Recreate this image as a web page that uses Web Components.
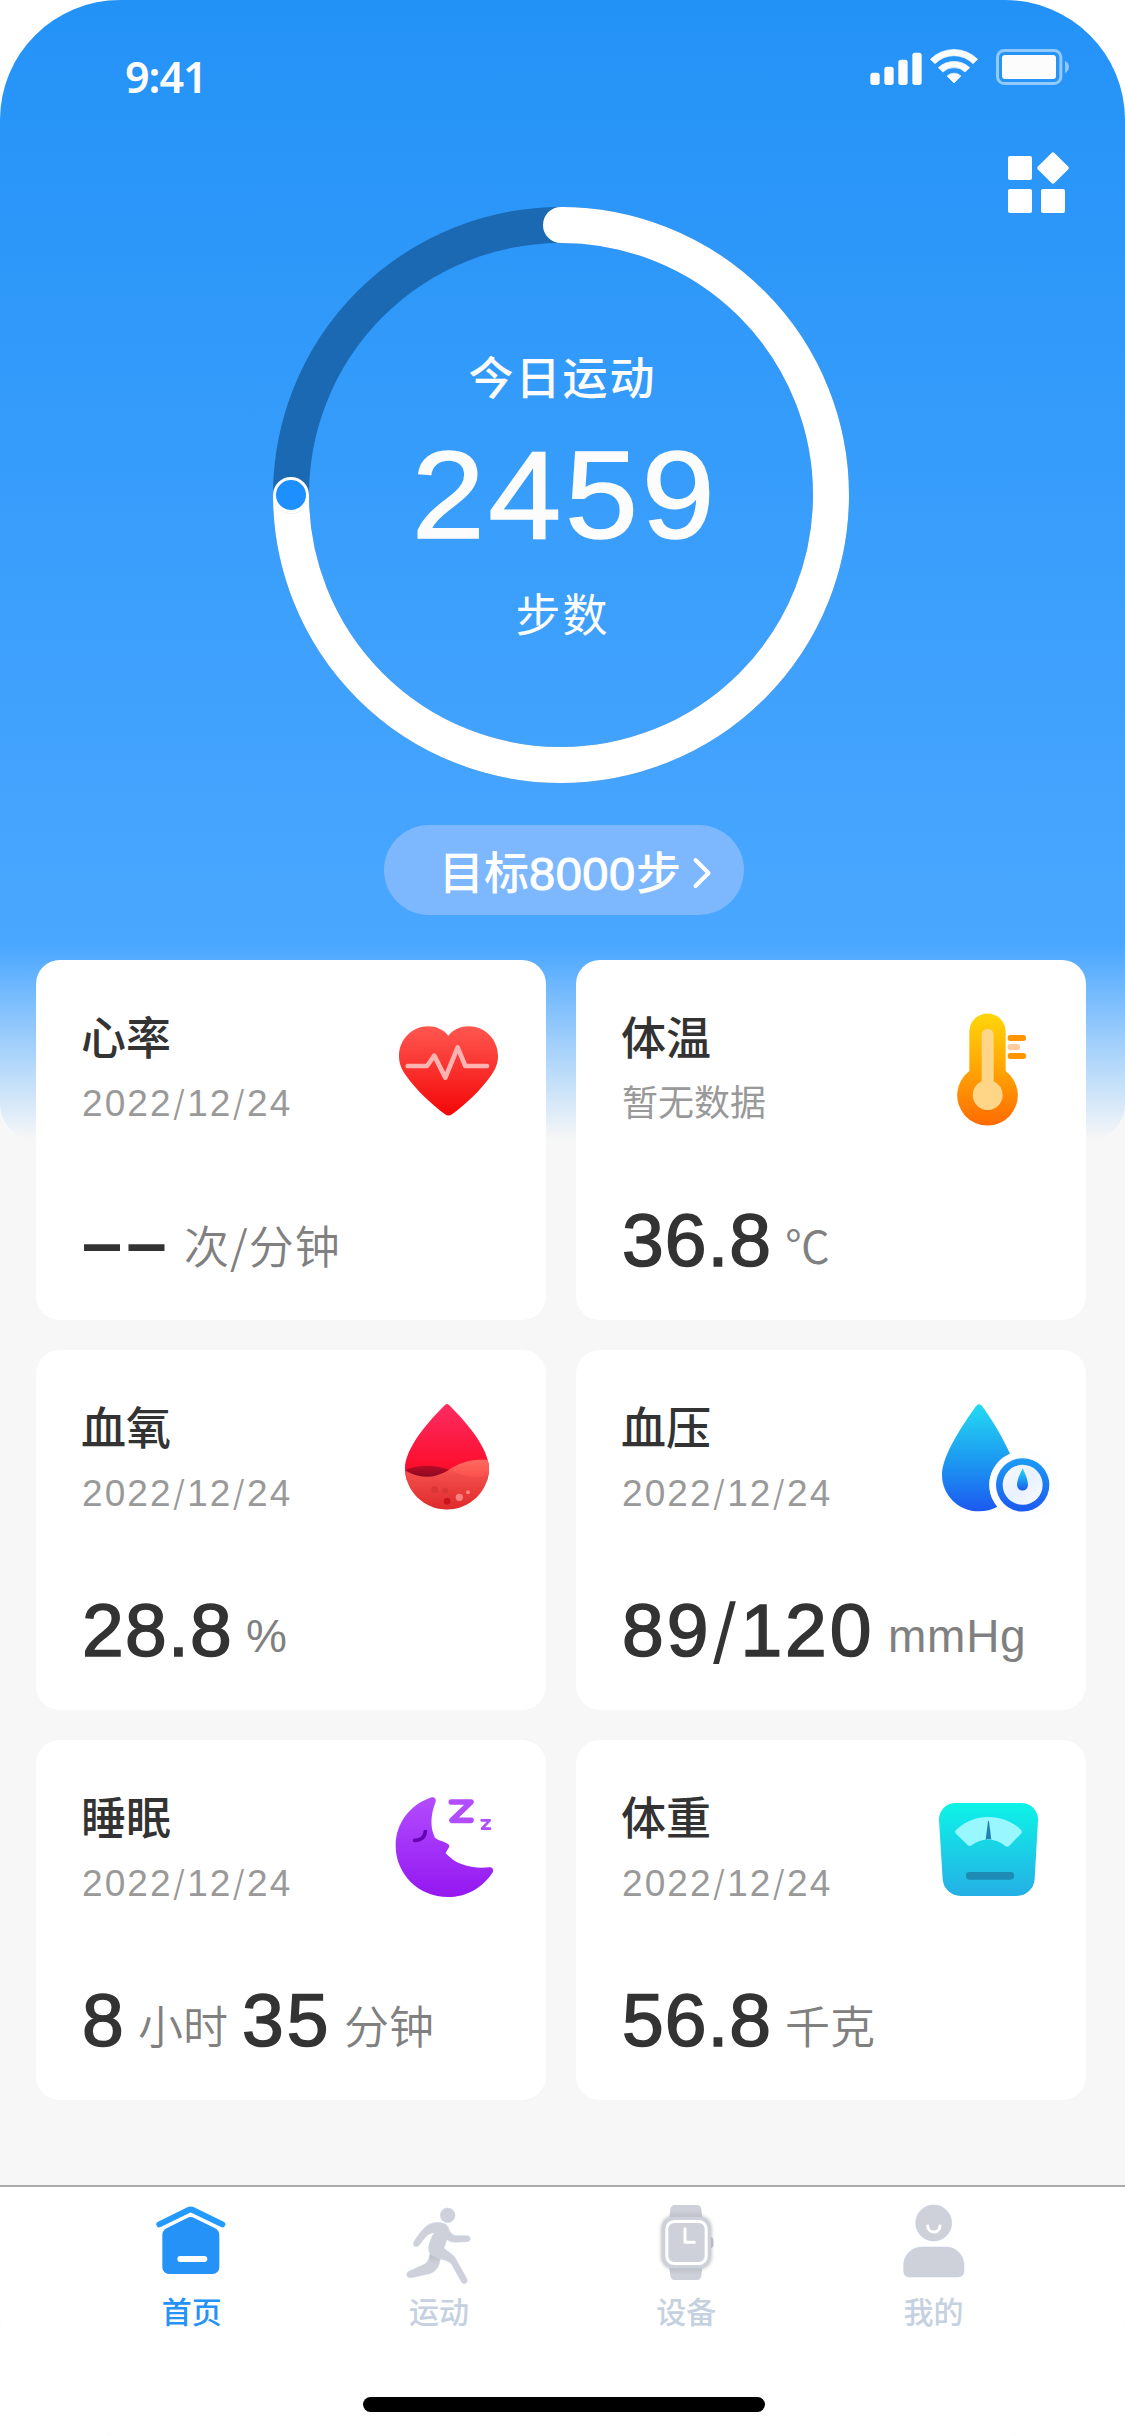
<!DOCTYPE html>
<html lang="zh-CN">
<head>
<meta charset="utf-8">
<title>健康</title>
<style>
  html, body { margin: 0; background: #fff; }
  body { width: 1125px; height: 2436px; overflow: hidden; font-family: "Noto Sans CJK SC", sans-serif; }
</style>
</head>
<body>
<health-app></health-app>

<script>
/* Text whose tracking is adjusted so that it spans the given width. */
class FitText extends HTMLElement {
  constructor() {
    super();
    this.attachShadow({ mode: 'open' }).innerHTML =
      '<style>:host{display:inline-block;white-space:nowrap}</style><span><slot></slot></span>';
  }
  connectedCallback() {
    const w = parseFloat(this.getAttribute('w'));
    const n = [...this.textContent].length;
    const natural = this.shadowRoot.querySelector('span').offsetWidth;
    if (w && natural) {
      this.style.letterSpacing = ((w - natural) / n).toFixed(3) + 'px';
      this.style.width = w + 'px';
    }
  }
}

class StatusBar extends HTMLElement {
  constructor() {
    super();
    this.attachShadow({ mode: 'open' }).innerHTML = `
<style>
  :host { display: flex; justify-content: space-between; align-items: flex-start; height: 103px; padding: 49px 55px 0 125px; color: #fcfcfc; }
  .time { font: 600 43px/60px "Noto Sans", sans-serif; margin-top: -2px; }
  svg { display: block; }
</style>
<fit-text class="time" w="82">9:41</fit-text>
<svg width="200" height="36" viewBox="90 87 600 108" fill="#fcfcfc">
  <rect x="91" y="158" width="28" height="37" rx="8"/>
  <rect x="133" y="140" width="28" height="55" rx="8"/>
  <rect x="175" y="119" width="28" height="76" rx="8"/>
  <rect x="217" y="98" width="28" height="97" rx="8"/>
  <g stroke="#fcfcfc" stroke-width="2" stroke-linejoin="round">
    <path d="M271 118A100 100 0 0 1 413 118L399 131A80 80 0 0 0 285 131Z"/>
    <path d="M295 143A68 68 0 0 1 389 143L375 156A48 48 0 0 0 309 156Z"/>
    <path d="M321 168A30 30 0 0 1 363 168L342 189Z"/>
  </g>
  <rect x="472.500" y="91.500" width="190" height="99" rx="20" fill="none" stroke="#fff" stroke-opacity=".5" stroke-width="9"/>
  <rect x="486" y="105" width="162" height="72" rx="9"/>
  <path d="M675 123C682 126 687 133 687 141C687 149 682 156 675 159Z" fill-opacity=".5"/>
</svg>`;
  }
}

class StepRing extends HTMLElement {
  constructor() {
    super();
    this.attachShadow({ mode: 'open' }).innerHTML = `
<style>
  :host { display: grid; width: 576px; height: 576px; color: #fcfcfc; }
  svg, .center { grid-area: 1 / 1; }
  svg { overflow: visible; }
  .center { display: flex; flex-direction: column; align-items: center; padding: 139px 0 0 3px; }
  .label { font-size: 45px; line-height: 60px; }
  .top { font-weight: 500; }
  .num { font-family: "Liberation Sans", sans-serif; font-size: 125px; line-height: 120px; margin: 29px 0 28px 4px; transform: scaleX(1.05); -webkit-text-stroke: 1.500px #fcfcfc; }
</style>
<svg width="576" height="576" viewBox="0 0 576 576" fill="none">
  <circle cx="288" cy="288" r="270" stroke="#1b69b3" stroke-width="36"/>
  <path d="M288 18A270 270 0 1 1 18 288" stroke="#fff" stroke-width="36"/>
  <circle cx="288" cy="18" r="18" fill="#fff"/>
  <circle cx="18" cy="289" r="18" fill="#000" opacity=".06"/>
  <circle cx="18" cy="288" r="16.500" fill="#1e8fff" stroke="#fff" stroke-width="3"/>
</svg>
<div class="center">
  <fit-text class="label top" w="188">今日运动</fit-text>
  <fit-text class="num" w="292">2459</fit-text>
  <fit-text class="label" w="94">步数</fit-text>
</div>`;
  }
}

class GoalPill extends HTMLElement {
  constructor() {
    super();
    this.attachShadow({ mode: 'open' }).innerHTML = `
<style>
  :host { display: flex; align-items: center; box-sizing: border-box; width: 360px; height: 90px; padding: 0 0 0 55px; border-radius: 45px; background: #7db8ff; color: #fff; font-size: 45px; line-height: 60px; font-weight: 500; }
  svg { margin: 5px 0 0 11px; }
  .t { display: flex; align-items: baseline; margin-top: 5px; }
  .d { font-family: "Liberation Sans", sans-serif; font-size: 47px; font-weight: 400; -webkit-text-stroke: 1px #fff; }
</style>
<div class="t"><span>目标</span><fit-text class="d" w="107">8000</fit-text><span>步</span></div>
<svg width="20" height="32" viewBox="0 0 20 32" fill="none" stroke="#fff" stroke-width="4" stroke-linecap="round" stroke-linejoin="round"><path d="M3.500 3L16.500 16L3.500 29"/></svg>`;
  }
}

const ICONS = {
  heart: `<defs><linearGradient id="g" x1="0" y1="0" x2="0" y2="1"><stop stop-color="#ff5750"/><stop offset="1" stop-color="#f30707"/></linearGradient></defs>
    <path fill="url(#g)" d="M205 107C190 89 169 79 145 79C96 79 57 119 57 168C57 192 66 210 79 228C108 270 158 316 194 342C202 348 209 348 217 342C254 316 303 270 332 228C345 210 354 192 354 168C354 119 315 79 266 79C242 79 220 89 205 107Z"/>
    <path fill="none" stroke="#ffb3b0" stroke-width="14" stroke-linecap="round" stroke-linejoin="round" d="M83 198H141L163 167L196 233L233 142L256 198H321"/>`,
  temp: `<defs><linearGradient id="g" x1="0" y1="0" x2="0" y2="1"><stop stop-color="#ffd60a"/><stop offset=".55" stop-color="#ff9f05"/><stop offset="1" stop-color="#ff6a00"/></linearGradient></defs>
    <g transform="translate(0 -30)"><path fill="url(#g)" d="M148 125A54.500 54.500 0 0 1 257 125V243A91 91 0 1 1 148 243Z"/>
    <path fill="#ffd588" d="M185 134A18 18 0 0 1 221 134V274A45 45 0 1 1 185 274Z"/>
    <rect x="263" y="135" width="55" height="18" rx="8" fill="#ff9500"/><rect x="263" y="162" width="37" height="18" rx="8" fill="#ffcb9b"/><rect x="263" y="189" width="55" height="18" rx="8" fill="#ff9500"/></g>`,
  oxygen: `<defs><linearGradient id="g" x1="0" y1="72" x2="0" y2="275" gradientUnits="userSpaceOnUse"><stop stop-color="#fb2c62"/><stop offset="1" stop-color="#fd0c29"/></linearGradient>
    <linearGradient id="h" x1="0" y1="240" x2="0" y2="390" gradientUnits="userSpaceOnUse"><stop stop-color="#fa5b57"/><stop offset="1" stop-color="#de2a2b"/></linearGradient>
    <linearGradient id="k" x1="0" y1="0" x2="0" y2="1"><stop stop-color="#b80c26"/><stop offset="1" stop-color="#8c0820"/></linearGradient>
    <linearGradient id="m" x1="0" y1="0" x2="0" y2="1"><stop stop-color="#ff6a60"/><stop offset="1" stop-color="#fb4f4b"/></linearGradient>
    <clipPath id="c"><path d="M195 75Q201 69 207 75C250 117 327 202 327 265C327 333 270 389 201 389C132 389 75 333 75 265C75 202 152 117 195 75Z"/></clipPath></defs>
    <g transform="translate(0 -30)"><g clip-path="url(#c)"><path fill="url(#g)" d="M70 60H335V300H70Z"/>
    <path fill="url(#h)" d="M70 269C120 296 165 294 206 270C245 247 285 233 335 242V395H70Z"/>
    <path fill="url(#k)" d="M75 271C115 254 160 253 207 269C165 297 115 297 75 271Z"/>
    <path fill="url(#m)" d="M207 269C245 246 285 233 330 243V275C314 293 285 297 250 286C232 280 220 274 207 269Z"/>
    <circle cx="164" cy="329" r="10" fill="#d93635"/><circle cx="196" cy="332" r="9" fill="#d93635"/><circle cx="201" cy="364" r="10" fill="#c9131b"/><circle cx="238" cy="352" r="11" fill="#fb817e"/><circle cx="264" cy="337" r="6" fill="#fb817e"/></g></g>`,
  pressure: `<defs><linearGradient id="g" x1="0" y1="0" x2="0" y2="1"><stop stop-color="#24daf2"/><stop offset=".55" stop-color="#1c96f1"/><stop offset="1" stop-color="#1c59f0"/></linearGradient>
    <linearGradient id="h" x1="0" y1="0" x2="0" y2="1"><stop stop-color="#1c9cf5"/><stop offset="1" stop-color="#1c59f0"/></linearGradient>
    <radialGradient id="s"><stop offset=".5" stop-color="#4a90f5" stop-opacity=".1"/><stop offset="1" stop-color="#4a90f5" stop-opacity="0"/></radialGradient>
    <linearGradient id="i" x1="0" y1="0" x2="1" y2="1"><stop stop-color="#f9fbff"/><stop offset=".5" stop-color="#e8f1ff"/><stop offset="1" stop-color="#fafcff"/></linearGradient></defs>
    <g transform="translate(0 -30)"><path fill="url(#g)" d="M168 78Q177 68 186 78C215 117 248 172 270 221A101 101 0 0 0 232 380C215 389 198 394 177 394C115 394 66 345 66 284C66 226 129 134 168 78Z"/>
    <circle cx="308" cy="315" r="112" fill="url(#s)"/><circle cx="308" cy="315" r="100" fill="#fff" fill-opacity=".7"/>
    <circle cx="308" cy="314.500" r="80" fill="url(#h)"/><circle cx="308" cy="314.500" r="60" fill="url(#i)"/>
    <path fill="url(#g)" d="M308 265C315 280 324 300 324 315A16 16 0 0 1 291 315C291 300 301 280 308 265Z"/></g>`,
  sleep: `<defs><linearGradient id="g" x1="0" y1="0" x2="0" y2="1"><stop stop-color="#b24cff"/><stop offset="1" stop-color="#9417f0"/></linearGradient></defs>
    <path fill="url(#g)" d="M155 52C163 50 169 57 167 65C150 108 151 145 165 173C174 182 199 184 208 196C209 204 199 212 197 220C231 257 278 267 328 262C336 261 341 268 339 275C309 323 259 351 204 351C117 351 47 283 47 197C47 129 91 73 155 52Z"/>
    <path fill="none" stroke="#6500b0" stroke-width="11" stroke-linecap="round" d="M104 181C122 182 135 171 136 155"/>
    <path fill="none" stroke="#b24cff" stroke-width="17" stroke-linecap="round" stroke-linejoin="round" d="M214 66H273L216 121H273"/>
    <path fill="none" stroke="#b24cff" stroke-width="8" stroke-linecap="round" stroke-linejoin="round" d="M305 121H329L306 146H330"/>`,
  weight: `<defs><linearGradient id="g" x1="0" y1="0" x2="0" y2="1"><stop stop-color="#0df3e7"/><stop offset="1" stop-color="#25afe5"/></linearGradient></defs>
    <path fill="url(#g)" d="M107 69H304A50 50 0 0 1 354 121L344 297A54 54 0 0 1 290 348H122A54 54 0 0 1 68 297L57 121A50 50 0 0 1 107 69Z"/>
    <path fill="#99f8ff" d="M108 150C136 124 169 111 205 111C242 111 276 124 303 149Q308 155 303 161L268 197Q262 203 255 197C224 173 186 173 155 196Q149 200 143 195L108 161Q104 155 108 150Z"/>
    <path fill="#2382b4" d="M204 124Q205.500 121 207 124L214 179C208 177 203 178 197 179Z"/>
    <rect x="138" y="276" width="144" height="23" rx="10" fill="#1e8bb5"/>`
};

class MetricCard extends HTMLElement {
  constructor() {
    super();
    this.attachShadow({ mode: 'open' });
  }
  connectedCallback() {
    this.shadowRoot.innerHTML = `
<style>
  :host { display: flex; flex-direction: column; box-sizing: border-box; height: 360px; padding: 46px 16px 0 45px; border-radius: 24px; background: #fff; color: #333; }
  .head { display: flex; justify-content: space-between; height: 120px; }
  .title { font-size: 45px; line-height: 60px; font-weight: 500; }
  .sub { margin: 10px 0 0 1px; font-size: 36px; line-height: 48px; color: #999; }
  .icon { flex: none; width: 150px; height: 120px; margin-top: -6px; }
  svg { display: block; overflow: visible; }
  .value { display: flex; align-items: baseline; margin-top: 72px; padding-left: 1px; }
</style>
<div class="head">
  <div><div class="title">${this.getAttribute('name')}</div><div class="sub"><slot name="sub"></slot></div></div>
  <div class="icon"><svg width="150" height="120" viewBox="0 0 450 360">${ICONS[this.getAttribute('icon')]}</svg></div>
</div>
<div class="value"><slot></slot></div>`;
  }
}

const NAV = {
  home: `<g transform="translate(-149 -96)"><path fill="none" stroke="#2499fe" stroke-width="18" stroke-linecap="round" stroke-linejoin="round" d="M177 163L265 120Q271 117 277 120L366 163"/>
    <path fill="#2492f7" d="M259 145Q271 137 283 145L343 174Q357 181 357 195V292A20 20 0 0 1 337 312H206A20 20 0 0 1 186 292V195Q186 181 200 174Z"/><rect x="231" y="258" width="90" height="18" rx="9" fill="#fff"/></g>`,
  run: `<defs><linearGradient id="l" x1="0" y1="0" x2="0" y2="1"><stop stop-color="#babcc2"/><stop offset="1" stop-color="#ced1da"/></linearGradient></defs>
    <g transform="translate(-890 -96)" stroke="#c4d2e5" stroke-width="1.500" fill="#ced1da"><circle cx="1042" cy="136" r="22"/>
    <path d="M1045 178C1050 191 1060 197 1070 197L1100 197C1113 198 1113 214 1100 215L1066 217C1052 216 1044 212 1038 207Z"/>
    <path d="M989 250C987 265 983 278 972 283L928 303C914 308 918 325 932 323L984 312C1005 307 1016 293 1020 267Z"/>
    <path stroke="none" fill="url(#l)" d="M990 253L987 270C989 280 1008 287 1016 276L1019 267Z"/>
    <path d="M975 171C989 157 1014 154 1032 161C1045 167 1049 181 1044 194L1031 234C1036 243 1056 248 1066 266L1100 327C1104 339 1090 347 1083 335L1054 283C1044 269 1018 269 1000 259C982 251 983 232 988 219C992 207 994 199 1002 188C989 189 981 194 974 203L956 226C947 236 934 226 942 214C951 198 962 183 975 171Z"/></g>`,
  watch: `<defs><linearGradient id="l" x1="0" y1="105" x2="0" y2="141" gradientUnits="userSpaceOnUse"><stop offset=".4" stop-color="#ced1da"/><stop offset="1" stop-color="#bfc1c8"/></linearGradient>
    <linearGradient id="r" x1="0" y1="330" x2="0" y2="294" gradientUnits="userSpaceOnUse"><stop offset=".4" stop-color="#ced1da"/><stop offset="1" stop-color="#bfc1c8"/></linearGradient>
    <filter id="f" x="-20%" y="-20%" width="140%" height="140%"><feGaussianBlur stdDeviation="6"/></filter></defs>
    <g transform="translate(-133 -96)"><rect x="187" y="140" width="146" height="155" rx="34" fill="#000" opacity=".35" filter="url(#f)"/>
    <path fill="#b9bbc2" d="M333 200Q341 202 341 210V226Q341 234 333 236Z"/>
    <path fill="url(#l)" d="M224 105H293Q303 106 305 118L308 141H209L212 118Q214 106 224 105Z"/>
    <path fill="url(#r)" d="M224 330H293Q303 329 305 317L308 294H209L212 317Q214 329 224 330Z"/>
    <rect x="188" y="141" width="144" height="153" rx="34" fill="#ced1da" stroke="#c4d2e5"/>
    <rect x="201.500" y="154.500" width="118" height="126" rx="22" fill="none" stroke="#fff" stroke-width="9"/>
    <path fill="none" stroke="#fff" stroke-width="9" stroke-linecap="round" stroke-linejoin="round" d="M256 176V217H284"/></g>`,
  me: `<g transform="translate(-872 -96)"><g fill="#ced1da" stroke="#bccde2" stroke-width="1.500"><circle cx="997" cy="159" r="54"/><path d="M960 231H1034A54 54 0 0 1 1088 285V302Q1088 321 1069 321H926Q907 321 907 302V285A54 54 0 0 1 960 231Z"/></g>
    <path fill="none" stroke="#fff" stroke-width="9" stroke-linecap="round" d="M979 168C980 192 1014 192 1016 168"/></g>`
};

class NavItem extends HTMLElement {
  constructor() { super(); this.attachShadow({ mode: 'open' }); }
  connectedCallback() {
    this.shadowRoot.innerHTML = `
<style>
  :host { display: flex; flex-direction: column; align-items: center; width: 247.3px; color: #c5d1e0; font-size: 30px; line-height: 40px; font-weight: 500; }
  :host([active]) { color: #2492f7; }
  svg { display: block; overflow: visible; margin-bottom: 4px; }
</style>
<svg width="84" height="84" viewBox="0 0 252 252">${NAV[this.getAttribute('icon')]}</svg>
<span><slot></slot></span>`;
  }
}

class TabBar extends HTMLElement {
  constructor() {
    super();
    this.attachShadow({ mode: 'open' }).innerHTML = `
<style>
  :host { display: flex; flex-direction: column; box-sizing: border-box; height: 251px; border-top: 2px solid #a9acab; background: #fff; }
  nav { display: flex; height: 195px; padding: 15px 0 0 68px; }
  .bar { width: 402px; height: 15px; margin-left: 363px; border-radius: 8px; background: #000; }
</style>
<nav><slot></slot></nav><div class="bar"></div>`;
  }
}

const DATE = '<fit-text slot="sub" class="date" w="210">2022<i>/</i>12<i>/</i>24</fit-text>';

class HealthApp extends HTMLElement {
  constructor() {
    super();
    this.attachShadow({ mode: 'open' }).innerHTML = `
<style>
  :host { display: flex; flex-direction: column; width: 1125px; height: 2436px; border-radius: 120px; overflow: hidden; background: #f7f7f7; }
  .hero { flex: none; height: 1140px; border-radius: 0 0 36px 36px; background: linear-gradient(180deg, #2392f7 0, #4aa7ff 83%, #f7f7f7 100%); }
  .tools { display: flex; justify-content: flex-end; height: 55px; padding-right: 56px; }
  step-ring { margin-left: 273px; }
  goal-pill { margin: 42px 0 0 384px; }
  .cards { flex: none; display: grid; grid-template-columns: 510px 510px; gap: 30px; margin: -180px 0 0 36px; height: 1225px; align-content: start; }
  .n { font-family: "Liberation Sans", sans-serif; font-size: 75px; line-height: 84px; margin-right: 13px; -webkit-text-stroke: 1.600px #333; }
  .dash { font-family: Inter, sans-serif; font-size: 72px; font-weight: 500; -webkit-text-stroke: 0; transform: translate(2px, 4px); }
  .date { font-family: "Liberation Sans", sans-serif; font-size: 37px; }
  i { font-family: Inter, sans-serif; font-style: normal; font-size: .96em; font-weight: 300; }
  .n i { font-weight: 400; -webkit-text-stroke: 0; }
  .u { font-family: "Liberation Sans", sans-serif; font-size: 46px; line-height: 60px; color: #808080; margin-right: 14px; transform: translateY(-4px); }
  .cjk { font-family: "Noto Sans CJK SC", sans-serif; font-size: 45px; font-weight: 350; transform: translateY(-2px); }
</style>
<div class="hero">
  <status-bar></status-bar>
  <div class="tools"><svg width="61" height="61" viewBox="504 396 183 183" fill="#fff">
    <rect x="504" y="408" width="72" height="72" rx="6"/><rect x="504" y="507" width="72" height="72" rx="6"/><rect x="603" y="507" width="72" height="72" rx="6"/>
    <rect x="604" y="409" width="70" height="70" rx="6" transform="rotate(45 639 444)"/></svg></div>
  <step-ring></step-ring>
  <goal-pill></goal-pill>
</div>
<div class="cards">
  <metric-card name="心率" icon="heart">${DATE}<fit-text class="n dash" w="89">––</fit-text><fit-text class="u cjk" w="157">次/分钟</fit-text></metric-card>
  <metric-card name="体温" icon="temp"><span slot="sub">暂无数据</span><fit-text class="n" w="150">36.8</fit-text><span class="u cjk">℃</span></metric-card>
  <metric-card name="血氧" icon="oxygen">${DATE}<fit-text class="n" w="151">28.8</fit-text><fit-text class="u" w="43">%</fit-text></metric-card>
  <metric-card name="血压" icon="pressure">${DATE}<fit-text class="n" w="253">89<i>/</i>120</fit-text><fit-text class="u" w="138">mmHg</fit-text></metric-card>
  <metric-card name="睡眠" icon="sleep">${DATE}<fit-text class="n" w="43">8</fit-text><span class="u cjk">小时</span><fit-text class="n" w="89">35</fit-text><span class="u cjk">分钟</span></metric-card>
  <metric-card name="体重" icon="weight">${DATE}<fit-text class="n" w="150">56.8</fit-text><span class="u cjk">千克</span></metric-card>
</div>
<tab-bar>
  <nav-item icon="home" active>首页</nav-item>
  <nav-item icon="run">运动</nav-item>
  <nav-item icon="watch">设备</nav-item>
  <nav-item icon="me">我的</nav-item>
</tab-bar>`;
  }
}

customElements.define('status-bar', StatusBar);
customElements.define('step-ring', StepRing);
customElements.define('goal-pill', GoalPill);
customElements.define('metric-card', MetricCard);
customElements.define('nav-item', NavItem);
customElements.define('tab-bar', TabBar);
customElements.define('health-app', HealthApp);
customElements.define('fit-text', FitText);
</script>
</body>
</html>
